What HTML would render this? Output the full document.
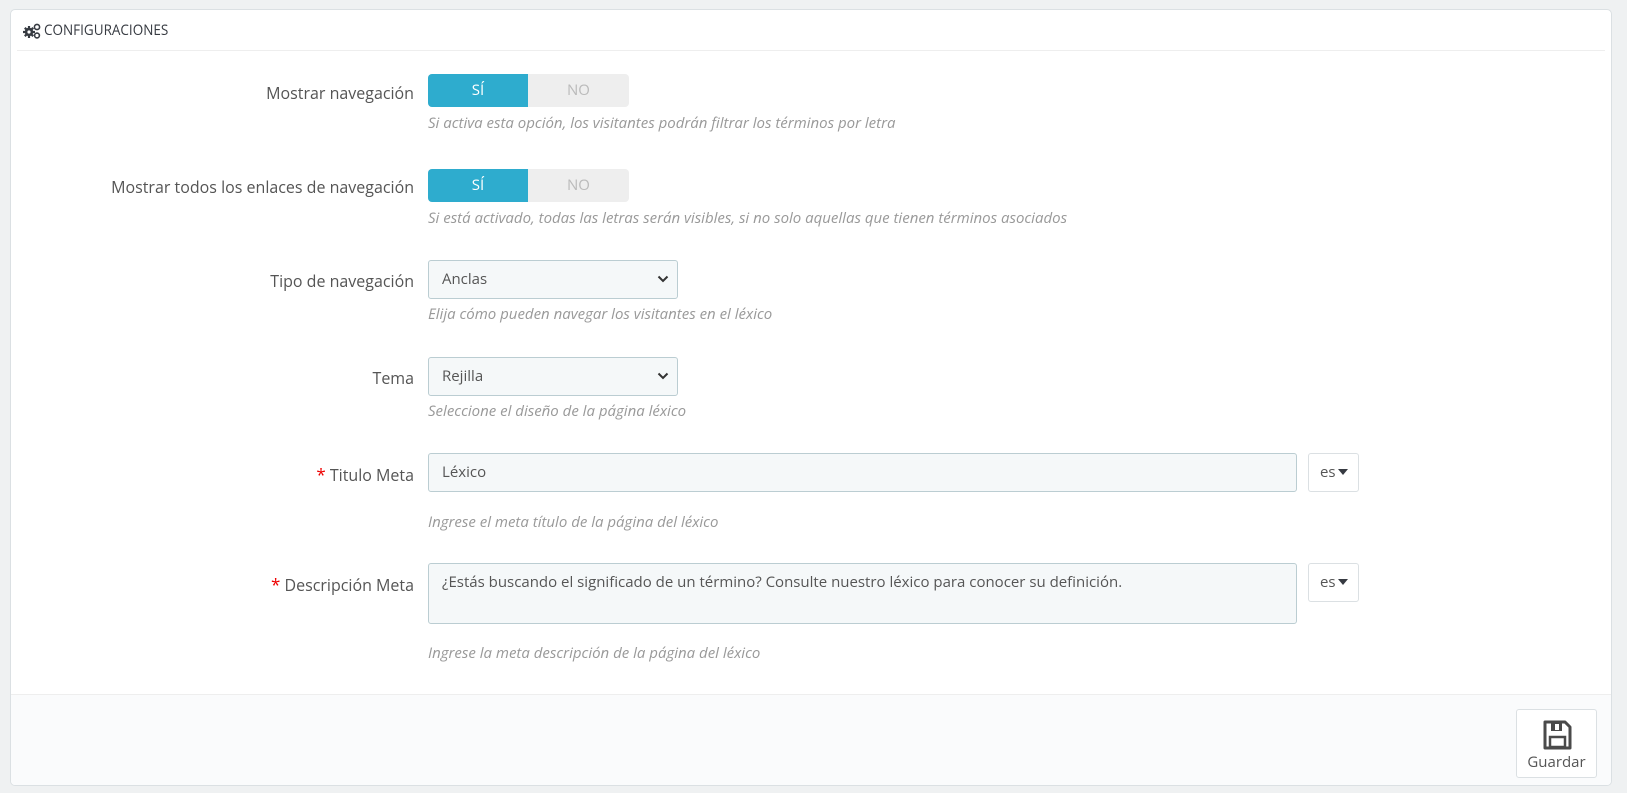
<!DOCTYPE html>
<html><head><meta charset="utf-8"><style>
*{box-sizing:border-box;margin:0;padding:0}
body{width:1627px;height:793px;background:#eff1f2;font-family:"Open Sans","Liberation Sans",sans-serif;color:#555;position:relative;overflow:hidden}
.panel{position:absolute;left:10px;top:9px;width:1602px;height:777px;background:#fff;border:1px solid #dbe0e3;border-radius:5px;overflow:hidden}
.hd{position:absolute;left:6px;right:6px;top:0;height:41px;border-bottom:1px solid #eee}
.hd span{position:absolute;left:27px;top:10px;font-size:15px;color:#363a41;transform:scaleX(.9);transform-origin:left}
.ab{position:absolute}
.lbl{position:absolute;right:1197px;font-size:16px;color:#555;text-align:right;white-space:nowrap}
.lbl b{color:#e00;font-weight:normal;font-size:17px}
.help{position:absolute;left:417px;font-size:15px;font-style:italic;color:#999;white-space:nowrap}
.tg{position:absolute;left:417px;width:201px;height:33px;border-radius:4px;background:#eee;overflow:hidden;font-size:15px}
.tg .y{position:absolute;left:0;top:0;width:100px;height:33px;background:#2eacce;color:#fff;text-align:center;line-height:33px}
.tg .n{position:absolute;left:100px;top:0;width:101px;height:33px;color:#bbb;text-align:center;line-height:33px}
.sel,.inp{position:absolute;left:417px;background:#f5f8f9;border:1px solid #bbcdd2;border-radius:3px;font-size:15px;color:#555;padding-left:13px}
.sel{width:250px;height:39px;line-height:37px}
.sel svg{position:absolute;right:8px;top:14px}
.es{position:absolute;left:1297px;width:51px;height:39px;border:1px solid #dbe0e3;border-radius:3px;background:#fff;font-size:15px;padding-left:11px;line-height:36px}
.es i{display:inline-block;width:0;height:0;border-left:5px solid transparent;border-right:5px solid transparent;border-top:6px solid #363a41;vertical-align:2px;margin-left:2px}
.ft{position:absolute;left:0;right:0;top:684px;bottom:0;background:#fafbfc;border-top:1px solid #eee}
.sv{position:absolute;left:1505px;top:14px;width:81px;height:69px;border:1px solid #dbe0e3;border-radius:3px;background:#fff;text-align:center;font-size:15px;color:#555}
</style></head><body>
<div class="panel">
<div class="hd">
<svg class="ab" style="left:6px;top:13px" width="18" height="16" viewBox="0 0 18 16"><g fill="#363a41"><circle cx="6" cy="9" r="4.2"/><g stroke="#363a41" stroke-width="2.2"><line x1="6" y1="3" x2="6" y2="15"/><line x1="0" y1="9" x2="12" y2="9"/><line x1="1.8" y1="4.8" x2="10.2" y2="13.2"/><line x1="10.2" y1="4.8" x2="1.8" y2="13.2"/></g><circle cx="6" cy="9" r="1.6" fill="#fff"/><circle cx="14" cy="4" r="2.6" fill="none" stroke="#363a41" stroke-width="1.6"/><circle cx="14" cy="12.5" r="2.4" fill="none" stroke="#363a41" stroke-width="1.6"/></g></svg>
<span>CONFIGURACIONES</span></div>

<div class="lbl" style="top:72px">Mostrar navegación</div>
<div class="tg" style="top:64px"><div class="y">SÍ</div><div class="n">NO</div></div>
<div class="help" style="top:103px">Si activa esta opción, los visitantes podrán filtrar los términos por letra</div>

<div class="lbl" style="top:166px">Mostrar todos los enlaces de navegación</div>
<div class="tg" style="top:159px"><div class="y">SÍ</div><div class="n">NO</div></div>
<div class="help" style="top:198px">Si está activado, todas las letras serán visibles, si no solo aquellas que tienen términos asociados</div>

<div class="lbl" style="top:260px">Tipo de navegación</div>
<div class="sel" style="top:250px">Anclas<svg width="12" height="8" viewBox="0 0 12 8"><path d="M1.5 1.5l4.5 4.5 4.5-4.5" fill="none" stroke="#333" stroke-width="2"/></svg></div>
<div class="help" style="top:294px">Elija cómo pueden navegar los visitantes en el léxico</div>

<div class="lbl" style="top:357px">Tema</div>
<div class="sel" style="top:347px">Rejilla<svg width="12" height="8" viewBox="0 0 12 8"><path d="M1.5 1.5l4.5 4.5 4.5-4.5" fill="none" stroke="#333" stroke-width="2"/></svg></div>
<div class="help" style="top:391px">Seleccione el diseño de la página léxico</div>

<div class="lbl" style="top:453px"><b>*</b> Titulo Meta</div>
<div class="inp" style="top:443px;width:869px;height:39px;line-height:37px">Léxico</div>
<div class="es" style="top:443px">es<i></i></div>
<div class="help" style="top:502px">Ingrese el meta título de la página del léxico</div>

<div class="lbl" style="top:563px"><b>*</b> Descripción Meta</div>
<div class="inp" style="top:553px;width:869px;height:61px;padding-top:8px">¿Estás buscando el significado de un término? Consulte nuestro léxico para conocer su definición.</div>
<div class="es" style="top:553px">es<i></i></div>
<div class="help" style="top:633px">Ingrese la meta descripción de la página del léxico</div>

<div class="ft"><div class="sv">
<svg style="display:block;margin:10px auto 2px" width="30" height="30" viewBox="0 0 30 30"><path d="M3 2h20l5 5v21H3z" fill="none" stroke="#4a4a4a" stroke-width="3" stroke-linejoin="round"/><rect x="9" y="3" width="11" height="8" fill="#4a4a4a"/><rect x="13" y="4" width="4" height="6" fill="#fff"/><rect x="8" y="17" width="15" height="10" fill="none" stroke="#4a4a4a" stroke-width="2.5"/></svg>
Guardar</div></div>
</div>
</body></html>
